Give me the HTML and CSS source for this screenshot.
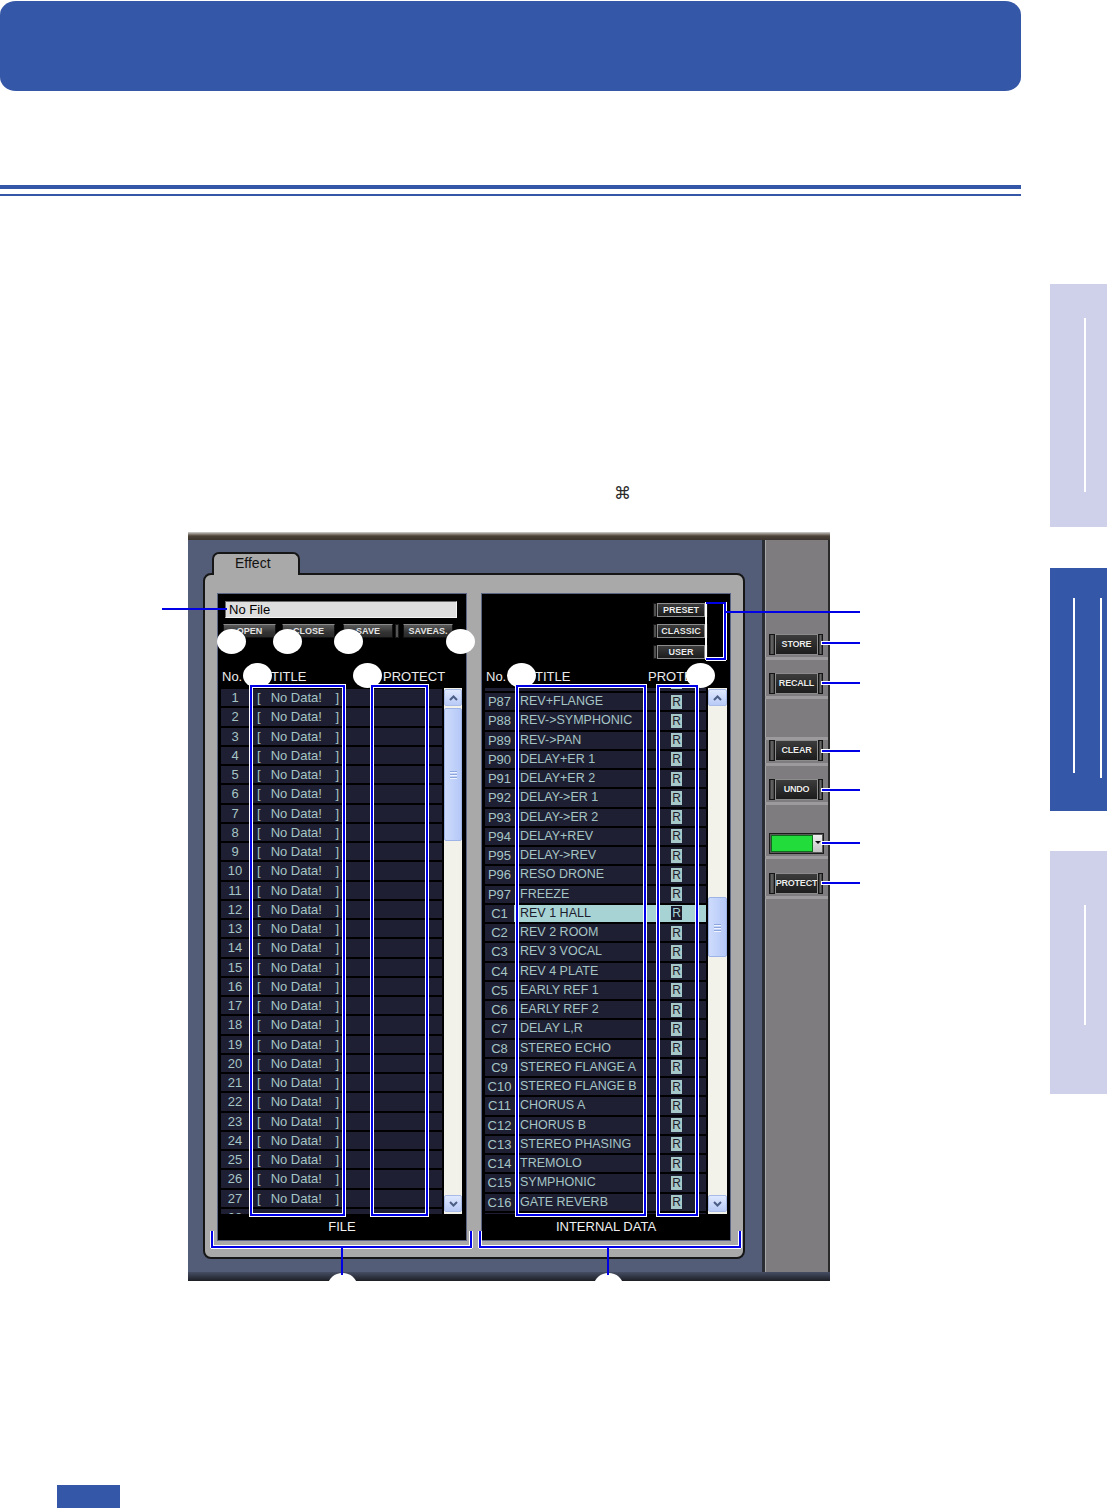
FILE: index.html
```html
<!DOCTYPE html>
<html lang="en">
<head>
    <meta charset="UTF-8">
    <meta name="viewport" content="width=device-width, initial-scale=1.0">
    <title>Effect Library</title>
    <link rel="stylesheet" href="styles.css">
</head>
<body>

<div class="page">
    <div class="main">
        <div class="chapter-bar"></div>
        <div class="rule"></div>
        <div class="cmd-line">&#8984;</div>

        <div class="figure">
            <div class="window">
                <div class="win-top"></div>
                <div class="win-body">
                    <div class="slate">
                        <div class="effect-tab">Effect</div>
                        <div class="panel">

                            <!-- FILE side -->
                            <div class="box file-list">
                                <div class="box-top">
                                    <div class="file-name">No File</div>
                                    <div class="file-btns">
                                        <span class="fbtn b-open">OPEN</span>
                                        <span class="fbtn b-close">CLOSE</span>
                                        <span class="fbtn b-save">SAVE</span>
                                        <span class="fear"></span>
                                        <span class="fbtn b-saveas">SAVEAS.</span>
                                    </div>
                                </div>
                                <div class="list-head">
                                    <span class="h-no">No.</span>
                                    <span class="h-title">TITLE</span>
                                    <span>PROTECT</span>
                                </div>
                                <div class="list-wrap">
                                    <div class="rows">
                                        <div class="row"><span class="no">1</span><span class="ttl"><i>[</i><em>No Data!</em><i>]</i></span></div>
                                        <div class="row"><span class="no">2</span><span class="ttl"><i>[</i><em>No Data!</em><i>]</i></span></div>
                                        <div class="row"><span class="no">3</span><span class="ttl"><i>[</i><em>No Data!</em><i>]</i></span></div>
                                        <div class="row"><span class="no">4</span><span class="ttl"><i>[</i><em>No Data!</em><i>]</i></span></div>
                                        <div class="row"><span class="no">5</span><span class="ttl"><i>[</i><em>No Data!</em><i>]</i></span></div>
                                        <div class="row"><span class="no">6</span><span class="ttl"><i>[</i><em>No Data!</em><i>]</i></span></div>
                                        <div class="row"><span class="no">7</span><span class="ttl"><i>[</i><em>No Data!</em><i>]</i></span></div>
                                        <div class="row"><span class="no">8</span><span class="ttl"><i>[</i><em>No Data!</em><i>]</i></span></div>
                                        <div class="row"><span class="no">9</span><span class="ttl"><i>[</i><em>No Data!</em><i>]</i></span></div>
                                        <div class="row"><span class="no">10</span><span class="ttl"><i>[</i><em>No Data!</em><i>]</i></span></div>
                                        <div class="row"><span class="no">11</span><span class="ttl"><i>[</i><em>No Data!</em><i>]</i></span></div>
                                        <div class="row"><span class="no">12</span><span class="ttl"><i>[</i><em>No Data!</em><i>]</i></span></div>
                                        <div class="row"><span class="no">13</span><span class="ttl"><i>[</i><em>No Data!</em><i>]</i></span></div>
                                        <div class="row"><span class="no">14</span><span class="ttl"><i>[</i><em>No Data!</em><i>]</i></span></div>
                                        <div class="row"><span class="no">15</span><span class="ttl"><i>[</i><em>No Data!</em><i>]</i></span></div>
                                        <div class="row"><span class="no">16</span><span class="ttl"><i>[</i><em>No Data!</em><i>]</i></span></div>
                                        <div class="row"><span class="no">17</span><span class="ttl"><i>[</i><em>No Data!</em><i>]</i></span></div>
                                        <div class="row"><span class="no">18</span><span class="ttl"><i>[</i><em>No Data!</em><i>]</i></span></div>
                                        <div class="row"><span class="no">19</span><span class="ttl"><i>[</i><em>No Data!</em><i>]</i></span></div>
                                        <div class="row"><span class="no">20</span><span class="ttl"><i>[</i><em>No Data!</em><i>]</i></span></div>
                                        <div class="row"><span class="no">21</span><span class="ttl"><i>[</i><em>No Data!</em><i>]</i></span></div>
                                        <div class="row"><span class="no">22</span><span class="ttl"><i>[</i><em>No Data!</em><i>]</i></span></div>
                                        <div class="row"><span class="no">23</span><span class="ttl"><i>[</i><em>No Data!</em><i>]</i></span></div>
                                        <div class="row"><span class="no">24</span><span class="ttl"><i>[</i><em>No Data!</em><i>]</i></span></div>
                                        <div class="row"><span class="no">25</span><span class="ttl"><i>[</i><em>No Data!</em><i>]</i></span></div>
                                        <div class="row"><span class="no">26</span><span class="ttl"><i>[</i><em>No Data!</em><i>]</i></span></div>
                                        <div class="row"><span class="no">27</span><span class="ttl"><i>[</i><em>No Data!</em><i>]</i></span></div>
                                        <div class="row"><span class="no">28</span><span class="ttl"><i>[</i><em>No Data!</em><i>]</i></span></div>
                                    </div>
                                    <div class="sb">
                                        <div class="sb-btn"><svg width="9" height="6" viewBox="0 0 9 6"><polyline points="1,5 4.5,1.5 8,5" fill="none" stroke="#4b5e86" stroke-width="2"/></svg></div>
                                        <div class="sb-track"><div class="sb-thumb"><i></i><i></i><i></i></div></div>
                                        <div class="sb-btn"><svg width="9" height="6" viewBox="0 0 9 6"><polyline points="1,1 4.5,4.5 8,1" fill="none" stroke="#4b5e86" stroke-width="2"/></svg></div>
                                    </div>
                                </div>
                                <div class="box-foot">FILE</div>
                            </div>

                            <!-- INTERNAL DATA side -->
                            <div class="box int-list">
                                <div class="box-top bank-btns">
                                    <span class="pbtn"><i></i><b>PRESET</b><i></i></span>
                                    <span class="pbtn"><i></i><b>CLASSIC</b><i></i></span>
                                    <span class="pbtn"><i></i><b>USER</b><i></i></span>
                                </div>
                                <div class="list-head">
                                    <span class="h-no">No.</span>
                                    <span class="h-title">TITLE</span>
                                    <span>PROTECT</span>
                                </div>
                                <div class="list-wrap">
                                    <div class="rows">
                                        <div class="row first"><span class="no"></span><span class="name"></span><span class="lock"><b>R</b></span></div>
                                        <div class="row"><span class="no">P87</span><span class="name">REV+FLANGE</span><span class="lock"><b>R</b></span></div>
                                        <div class="row"><span class="no">P88</span><span class="name">REV-&gt;SYMPHONIC</span><span class="lock"><b>R</b></span></div>
                                        <div class="row"><span class="no">P89</span><span class="name">REV-&gt;PAN</span><span class="lock"><b>R</b></span></div>
                                        <div class="row"><span class="no">P90</span><span class="name">DELAY+ER 1</span><span class="lock"><b>R</b></span></div>
                                        <div class="row"><span class="no">P91</span><span class="name">DELAY+ER 2</span><span class="lock"><b>R</b></span></div>
                                        <div class="row"><span class="no">P92</span><span class="name">DELAY-&gt;ER 1</span><span class="lock"><b>R</b></span></div>
                                        <div class="row"><span class="no">P93</span><span class="name">DELAY-&gt;ER 2</span><span class="lock"><b>R</b></span></div>
                                        <div class="row"><span class="no">P94</span><span class="name">DELAY+REV</span><span class="lock"><b>R</b></span></div>
                                        <div class="row"><span class="no">P95</span><span class="name">DELAY-&gt;REV</span><span class="lock"><b>R</b></span></div>
                                        <div class="row"><span class="no">P96</span><span class="name">RESO DRONE</span><span class="lock"><b>R</b></span></div>
                                        <div class="row"><span class="no">P97</span><span class="name">FREEZE</span><span class="lock"><b>R</b></span></div>
                                        <div class="row sel"><span class="no">C1</span><span class="name">REV 1 HALL</span><span class="lock"><b>R</b></span></div>
                                        <div class="row"><span class="no">C2</span><span class="name">REV 2 ROOM</span><span class="lock"><b>R</b></span></div>
                                        <div class="row"><span class="no">C3</span><span class="name">REV 3 VOCAL</span><span class="lock"><b>R</b></span></div>
                                        <div class="row"><span class="no">C4</span><span class="name">REV 4 PLATE</span><span class="lock"><b>R</b></span></div>
                                        <div class="row"><span class="no">C5</span><span class="name">EARLY REF 1</span><span class="lock"><b>R</b></span></div>
                                        <div class="row"><span class="no">C6</span><span class="name">EARLY REF 2</span><span class="lock"><b>R</b></span></div>
                                        <div class="row"><span class="no">C7</span><span class="name">DELAY L,R</span><span class="lock"><b>R</b></span></div>
                                        <div class="row"><span class="no">C8</span><span class="name">STEREO ECHO</span><span class="lock"><b>R</b></span></div>
                                        <div class="row"><span class="no">C9</span><span class="name">STEREO FLANGE A</span><span class="lock"><b>R</b></span></div>
                                        <div class="row"><span class="no">C10</span><span class="name">STEREO FLANGE B</span><span class="lock"><b>R</b></span></div>
                                        <div class="row"><span class="no">C11</span><span class="name">CHORUS A</span><span class="lock"><b>R</b></span></div>
                                        <div class="row"><span class="no">C12</span><span class="name">CHORUS B</span><span class="lock"><b>R</b></span></div>
                                        <div class="row"><span class="no">C13</span><span class="name">STEREO PHASING</span><span class="lock"><b>R</b></span></div>
                                        <div class="row"><span class="no">C14</span><span class="name">TREMOLO</span><span class="lock"><b>R</b></span></div>
                                        <div class="row"><span class="no">C15</span><span class="name">SYMPHONIC</span><span class="lock"><b>R</b></span></div>
                                        <div class="row"><span class="no">C16</span><span class="name">GATE REVERB</span><span class="lock"><b>R</b></span></div>
                                        <div class="row"><span class="no"></span><span class="name"></span><span class="lock"></span></div>
                                    </div>
                                    <div class="sb">
                                        <div class="sb-btn"><svg width="9" height="6" viewBox="0 0 9 6"><polyline points="1,5 4.5,1.5 8,5" fill="none" stroke="#4b5e86" stroke-width="2"/></svg></div>
                                        <div class="sb-track"><div class="sb-thumb"><i></i><i></i><i></i></div></div>
                                        <div class="sb-btn"><svg width="9" height="6" viewBox="0 0 9 6"><polyline points="1,1 4.5,4.5 8,1" fill="none" stroke="#4b5e86" stroke-width="2"/></svg></div>
                                    </div>
                                </div>
                                <div class="box-foot">INTERNAL DATA</div>
                            </div>

                        </div>
                    </div>

                    <div class="side">
                        <div class="slot"><span class="sbtn"><i></i><b>STORE</b><i></i></span></div>
                        <div class="slot s-recall"><span class="sbtn"><i></i><b>RECALL</b><i></i></span></div>
                        <div class="slot s-clear"><span class="sbtn"><i></i><b>CLEAR</b><i></i></span></div>
                        <div class="slot s-undo"><span class="sbtn"><i></i><b>UNDO</b><i></i></span></div>
                        <div class="slot s-color"><span class="swatch"><span class="green"></span><span class="drop"></span></span></div>
                        <div class="slot s-protect"><span class="sbtn"><i></i><b>PROTECT</b><i></i></span></div>
                    </div>
                </div>
                <div class="win-bottom"></div>
            </div>

            <!-- callouts laid over the screenshot -->
            <div class="mark m-open"></div>
            <div class="mark m-close"></div>
            <div class="mark m-save"></div>
            <div class="mark m-saveas"></div>
            <div class="mark m-title-l"></div>
            <div class="mark m-prot-l"></div>
            <div class="mark m-title-r"></div>
            <div class="mark m-prot-r"></div>
            <div class="mark m-file"></div>
            <div class="mark m-int"></div>

            <div class="bracket b-title-l"></div>
            <div class="bracket b-prot-l"></div>
            <div class="bracket b-title-r"></div>
            <div class="bracket b-prot-r"></div>
            <div class="bracket open b-bank"></div>
            <div class="bracket open b-file"></div>
            <div class="bracket open b-int"></div>

            <div class="lead l-name"></div>
            <div class="lead l-bank"></div>
            <div class="lead l-store"></div>
            <div class="lead l-recall"></div>
            <div class="lead l-clear"></div>
            <div class="lead l-undo"></div>
            <div class="lead l-color"></div>
            <div class="lead l-protect"></div>
            <div class="stem s-file"></div>
            <div class="stem s-int"></div>
        </div>

        <div class="page-no"></div>
    </div>

    <div class="side-tabs">
        <div class="stab stab-1"><span class="tline t1"></span></div>
        <div class="stab stab-2"><span class="tline t2a"></span><span class="tline t2b"></span></div>
        <div class="stab stab-3"><span class="tline t3"></span></div>
    </div>
</div>

</body>
</html>
```

FILE: styles.css
```css
html, body {
    margin: 0;
    overflow: hidden;
}

body {
    width: 1107px;
    height: 1508px;
    background: #fff;
    font-family: "Liberation Sans", Arial, sans-serif;
}

.page {
    display: grid;
    grid-template-columns: 1021px 57px;
    column-gap: 29px;
}

/* page chrome */
.chapter-bar {
    height: 90px;
    margin-top: 1px;
    background: #3557a7;
    border-radius: 16px / 14px;
}

.rule {
    margin-top: 94px;
    height: 5px;
    border-top: 4px solid #3557a7;
    border-bottom: 2px solid #3557a7;
}

.cmd-line {
    margin-top: 289px;
    height: 17px;
    padding-left: 614px;
    font: 17px/17px "DejaVu Sans", sans-serif;
    color: #2a2a2a;
}

.page-no {
    margin: 204px 0 0 57px;
    width: 63px;
    height: 23px;
    background: #3557a7;
}

.side-tabs {
    padding-top: 284px;
    display: flex;
    flex-direction: column;
}

.stab {
    height: 243px;
    display: flex;
    align-items: flex-start;
    box-sizing: border-box;
    background: #cfd0ea;
}

.stab-1 { padding: 34px 0 0 34px; }
.stab-2 { margin-top: 41px; padding: 30px 0 0 23px; gap: 25px; background: #3557a7; }
.stab-3 { margin-top: 40px; padding: 54px 0 0 34px; }

.tline { width: 2px; background: #fff; }
.t1 { height: 174px; }
.t2a { height: 175px; }
.t2b { height: 180px; }
.t3 { height: 120px; }

/* the screenshot */
.figure {
    position: relative;
    margin-top: 30px;
    height: 749px;
}

.window {
    margin-left: 188px;
    width: 642px;
    height: 749px;
    display: flex;
    flex-direction: column;
    background: #535d77;
}

.win-top {
    height: 8px;
    background: linear-gradient(#d2d2d2, #8d857c 2px, #4b4238 4px, #3a332d);
}

.win-body {
    flex: 1;
    display: flex;
}

.win-bottom {
    height: 9px;
    background: linear-gradient(#464e64, #1d1f26);
}

.slate {
    width: 574px;
    box-sizing: border-box;
    padding: 12px 0 0 15px;
}

.effect-tab {
    position: relative;
    z-index: 1;
    margin: 0 0 -2px 9px;
    width: 88px;
    height: 23px;
    box-sizing: border-box;
    padding-left: 21px;
    border: 2px solid #161616;
    border-bottom: none;
    border-radius: 7px 7px 0 0;
    background: #a9a9a9;
    font-size: 14px;
    line-height: 19px;
    color: #111;
}

.panel {
    width: 542px;
    height: 686px;
    box-sizing: border-box;
    padding: 18px 12px 16px;
    display: flex;
    gap: 14px;
    border: 2px solid #161616;
    border-radius: 8px;
    background: #a9a9a9;
}

.box {
    width: 250px;
    height: 648px;
    box-sizing: border-box;
    border: 1px solid #5c6684;
    background: #000;
    display: flex;
    flex-direction: column;
}

.box-top {
    height: 76px;
    flex: none;
}

.file-name {
    margin: 7px 9px 0 7px;
    height: 17px;
    box-sizing: border-box;
    padding-left: 3px;
    border: 1px solid;
    border-color: #6a6a6a #f4f4f4 #f4f4f4 #6a6a6a;
    background: #dedede;
    font-size: 13px;
    line-height: 15px;
    color: #000;
}

.file-btns {
    margin-top: 6px;
    padding-left: 5px;
    height: 14px;
    display: flex;
}

.fbtn {
    height: 14px;
    box-sizing: border-box;
    border: 1px solid #111;
    border-top-color: #8a8a8a;
    background: linear-gradient(#5a5a5a, #333 60%, #2a2a2a);
    color: #e4e4e4;
    font-size: 9px;
    font-weight: bold;
    line-height: 12px;
    text-align: center;
}

.b-open { width: 53px; }
.b-close { width: 53px; margin-left: 6px; }
.b-save { width: 50px; margin-left: 8px; }
.b-saveas { width: 50px; margin-left: 4px; }

.fear {
    width: 4px;
    height: 14px;
    margin-left: 2px;
    box-sizing: border-box;
    border: 1px solid #1a1a1a;
    background: #555;
}

.bank-btns {
    display: flex;
    flex-direction: column;
    align-items: flex-end;
    gap: 7px;
    padding: 9px 22px 0 0;
    box-sizing: border-box;
}

.pbtn, .sbtn {
    display: flex;
}

.pbtn {
    height: 14px;
}

.pbtn i, .sbtn i {
    box-sizing: border-box;
    border: 1px solid #151515;
    background: linear-gradient(to right, #2c2c2c, #6c6c6c 45%, #3a3a3a);
}

.pbtn i { width: 4px; }
.pbtn i + b + i { width: 3px; }

.pbtn b, .sbtn b {
    box-sizing: border-box;
    border: 1px solid #8c8c8c;
    background: linear-gradient(#3c3c3c, #1c1c1c);
    color: #eee;
    font-size: 9px;
    text-align: center;
    white-space: nowrap;
    text-shadow: 0 0 1px #000;
}

.pbtn b {
    width: 48px;
    line-height: 12px;
}

.list-head {
    height: 14px;
    flex: none;
    padding-left: 4px;
    display: flex;
    font-size: 13px;
    line-height: 14px;
    color: #ececec;
    white-space: nowrap;
}

.h-no { width: 49px; }
.file-list .h-title { width: 112px; }
.int-list .h-title { width: 113px; }

.list-wrap {
    flex: none;
    margin-top: 4px;
    height: 526px;
    padding-left: 3px;
    display: flex;
    gap: 2px;
}

.rows {
    width: 221px;
    height: 526px;
    box-sizing: border-box;
    overflow: hidden;
    display: flex;
    flex-direction: column;
    gap: 2px;
}

.file-list .rows { padding-top: 1px; }
.int-list .first { margin-top: -14.25px; }

.row {
    flex: none;
    height: 17.25px;
    display: flex;
    background: #1f1f33;
    color: #a6c5c5;
    font-size: 13px;
    line-height: 17.25px;
    white-space: nowrap;
}

.file-list .no { width: 28px; text-align: center; }
.int-list .no { width: 29px; text-align: center; }

.ttl {
    width: 98px;
    box-sizing: border-box;
    padding: 0 8px;
    display: flex;
}

.ttl i { font-style: normal; }

.ttl em {
    font-style: normal;
    margin: 0 auto 0 10px;
}

.name {
    width: 140px;
    box-sizing: border-box;
    padding-left: 6px;
    font-size: 12.5px;
}

.lock {
    width: 45px;
    display: flex;
    align-items: center;
    justify-content: center;
}

.lock b {
    width: 11px;
    height: 14px;
    background: #a7c8c8;
    color: #1c1c2c;
    font-size: 12px;
    font-weight: normal;
    line-height: 14px;
    text-align: center;
}

.row.sel {
    background: linear-gradient(to right, #1f1f33 29px, #a8d3d5 29px);
}

.row.sel .name { color: #1c1c2c; }
.row.sel .lock b { background: #1c1c2c; color: #a8d3d5; }

/* scroll bars */
.sb {
    width: 18px;
    box-sizing: border-box;
    padding: 1px 0 2px;
    display: flex;
    flex-direction: column;
    background: #f2f1ea;
}

.int-list .sb { width: 19px; }

.sb-btn {
    height: 17px;
    box-sizing: border-box;
    border: 1px solid #a9bce8;
    border-radius: 2px;
    background: linear-gradient(#dfe8fe, #b8caf6);
    display: flex;
    align-items: center;
    justify-content: center;
}

.sb-track { flex: 1; }

.sb-thumb {
    box-sizing: border-box;
    border: 1px solid #9fb4e6;
    border-radius: 2px;
    background: linear-gradient(to right, #cddbfc, #b5c8f7);
    display: flex;
    flex-direction: column;
    align-items: center;
    justify-content: center;
    gap: 2px;
}

.sb-thumb i {
    width: 7px;
    height: 1px;
    background: #8ea6de;
    box-shadow: 0 1px #eef3ff;
}

.file-list .sb-thumb { margin-top: 2px; height: 133px; }
.int-list .sb-thumb { margin-top: 191px; height: 60px; }

.box-foot {
    flex: 1;
    text-align: center;
    color: #f0f0f0;
    font-size: 13px;
    line-height: 26px;
}

/* right hand button strip */
.side {
    width: 68px;
    box-sizing: border-box;
    padding-top: 94px;
    display: flex;
    flex-direction: column;
    border-left: 3px solid #2b2d35;
    border-right: 2px solid #2a2a2a;
    box-shadow: inset 1px 0 #a8a8a8;
    background: #7e7c7e;
}

.slot {
    padding: 0 0 2px 4px;
    border-bottom: 3px solid #9c9a9c;
}

.s-recall { margin-top: 13px; }
.s-clear { margin-top: 38px; border-top: 3px solid #9c9a9c; }
.s-undo { margin-top: 13px; }
.s-color { margin-top: 28px; }
.s-protect { margin-top: 14px; }

.sbtn {
    width: 54px;
    height: 21px;
}

.sbtn i { width: 6px; }
.sbtn i + b + i { width: 5px; }

.sbtn b {
    flex: 1;
    line-height: 19px;
    letter-spacing: -0.2px;
}

.swatch {
    width: 55px;
    height: 21px;
    box-sizing: border-box;
    display: flex;
    border: 1px solid #1a1a1a;
    background: #5a5a5a;
}

.green {
    flex: 1;
    margin: 1px 0 1px 1px;
    border: 1px solid #0d6d1d;
    background: #22dc3c;
}

.drop {
    width: 9px;
    margin: 1px 1px 1px 0;
    background: linear-gradient(#eeeeee, #c4c4c4);
    position: relative;
}

.drop::after {
    content: "";
    position: absolute;
    left: 2px;
    top: 6px;
    border-left: 3px solid transparent;
    border-right: 3px solid transparent;
    border-top: 3px solid #111;
}

/* callouts */
.mark {
    position: absolute;
    width: 29px;
    height: 25px;
    border-radius: 50%;
    background: #fff;
}

.m-open { left: 217px; top: 97px; }
.m-close { left: 273px; top: 97px; }
.m-save { left: 334px; top: 97px; }
.m-saveas { left: 446px; top: 97px; }
.m-title-l { left: 243px; top: 131px; }
.m-prot-l { left: 353px; top: 131px; }
.m-title-r { left: 507px; top: 131px; }
.m-prot-r { left: 686px; top: 131px; }
.m-file { left: 328px; top: 741px; }
.m-int { left: 594px; top: 741px; }

.bracket {
    position: absolute;
    box-sizing: border-box;
    border: 2px solid #0000e6;
    box-shadow: 0 0 0 1px #fff, inset 0 0 0 1px #fff;
}

/* brackets with one side left open */
.bracket.open {
    box-shadow: -1px 0 #fff, 1px 0 #fff, 0 1px #fff,
        inset 1px 0 #fff, inset -1px 0 #fff, inset 0 -1px #fff;
}

.b-title-l { left: 250px; top: 153px; width: 95px; height: 531px; }
.b-prot-l { left: 371px; top: 153px; width: 57px; height: 531px; }
.b-title-r { left: 516px; top: 153px; width: 130px; height: 531px; }
.b-prot-r { left: 657px; top: 153px; width: 41px; height: 531px; }

.b-bank {
    left: 706px;
    top: 70px;
    width: 20px;
    height: 58px;
    border-left: none;
    box-shadow: 1px 0 #fff, 0 1px #fff, 0 -1px #fff,
        inset -1px 0 #fff, inset 0 -1px #fff, inset 0 1px #fff;
}

.b-file { left: 211px; top: 699px; width: 261px; height: 17px; border-top: none; }
.b-int { left: 479px; top: 699px; width: 262px; height: 17px; border-top: none; }

.lead {
    position: absolute;
    height: 2px;
    background: #0000e6;
}

.l-name { left: 162px; top: 76px; width: 65px; }
.l-bank { left: 726px; top: 79px; width: 134px; }
.l-store, .l-recall, .l-clear, .l-undo, .l-color, .l-protect {
    left: 822px;
    width: 38px;
    box-shadow: 0 0 0 1px #fff;
}
.l-store { top: 110px; }
.l-recall { top: 150px; }
.l-clear { top: 218px; }
.l-undo { top: 257px; }
.l-color { top: 310px; }
.l-protect { top: 350px; }

.stem {
    position: absolute;
    top: 716px;
    width: 2px;
    height: 27px;
    background: #0000e6;
}

.s-file { left: 341px; }
.s-int { left: 607px; }
```
